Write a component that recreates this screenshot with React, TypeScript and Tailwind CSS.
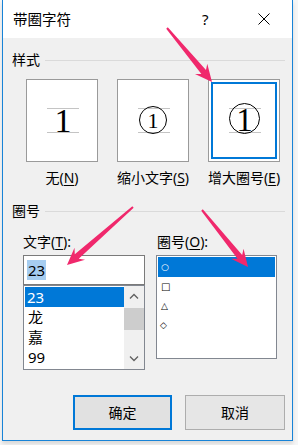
import React from "react";

const PINK = "#f0286c";

function arrowPoints(x1: number, y1: number, x2: number, y2: number) {
  const dx = x2 - x1;
  const dy = y2 - y1;
  const len = Math.hypot(dx, dy);
  const ux = dx / len;
  const uy = dy / len;
  const nx = -uy;
  const ny = ux;
  const head = 17;
  const bx = x2 - ux * head;
  const by = y2 - uy * head;
  const nb = x2 - ux * (head - 4);
  const nby = y2 - uy * (head - 4);
  const pts = [
    [x1 + nx * 1, y1 + ny * 1],
    [nb + nx * 3, nby + ny * 3],
    [bx + nx * 8, by + ny * 8],
    [x2, y2],
    [bx - nx * 8, by - ny * 8],
    [nb - nx * 3, nby - ny * 3],
    [x1 - nx * 1, y1 - ny * 1],
  ];
  return pts.map((p) => p.join(",")).join(" ");
}

const Arrows: React.FC = () => (
  <svg className="absolute left-0 top-0 pointer-events-none" width={298} height={445}>
    <polygon points={arrowPoints(167, 28, 212, 82)} fill={PINK} />
    <polygon points={arrowPoints(133, 207, 67, 265)} fill={PINK} />
    <polygon points={arrowPoints(202, 210, 248, 267)} fill={PINK} />
  </svg>
);

const Guides = () => (
  <>
    <line x1={20} y1={28.5} x2={52} y2={28.5} stroke="#c4c4c4" />
    <line x1={20} y1={52.5} x2={52} y2={52.5} stroke="#c4c4c4" />
  </>
);

const serif = { fontFamily: "'Liberation Serif', serif" };

const Preview: React.FC<{ kind: number }> = ({ kind }) => (
  <svg width={70} height={81}>
    <Guides />
    {kind === 0 && (
      <text x={36} y={52} textAnchor="middle" fontSize={34} style={serif}>
        1
      </text>
    )}
    {kind === 1 && (
      <>
        <circle cx={35} cy={40} r={13.5} fill="none" stroke="#000" strokeWidth={1} />
        <text x={35} y={48} textAnchor="middle" fontSize={22} style={serif}>
          1
        </text>
      </>
    )}
    {kind === 2 && (
      <>
        <circle cx={35.5} cy={38.5} r={15} fill="none" stroke="#000" strokeWidth={1} />
        <text x={35.5} y={51} textAnchor="middle" fontSize={33} style={serif}>
          1
        </text>
      </>
    )}
  </svg>
);

const Chevron: React.FC<{ up?: boolean }> = ({ up }) => (
  <svg width={10} height={6}>
    <path d={up ? "M1 5.5 L5 1.5 L9 5.5" : "M1 0.5 L5 4.5 L9 0.5"} fill="none" stroke="#606060" strokeWidth={1.3} />
  </svg>
);

const Mn: React.FC<{ c: string }> = ({ c }) => <span className="underline underline-offset-2">{c}</span>;

export default function App() {
  const styles = [
    { label: <>无(<Mn c="N" />)</> },
    { label: <>缩小文字(<Mn c="S" />)</> },
    { label: <>增大圈号(<Mn c="E" />)</> },
  ];

  return (
    <div className="relative w-[298px] h-[445px] bg-[#f6f6f6] overflow-hidden font-['Noto_Sans','Noto_Sans_CJK_SC',sans-serif] text-black">
      <div className="ml-[2px] w-[291px] h-[441px] flex flex-col border-x border-b border-[#1883d7] shadow-[0_3px_4px_rgba(0,0,0,0.12)]">
        {/* title bar */}
        <div className="h-[38px] bg-white flex items-center pl-[10px] text-[14.5px] leading-[16px]">
          <span>带圈字符</span>
          <span className="ml-[131px] text-[15px]">?</span>
          <svg className="ml-[49px]" width={12} height={12}>
            <path d="M0.5 0.5 L11.5 11.5 M11.5 0.5 L0.5 11.5" stroke="#000" strokeWidth={1} />
          </svg>
        </div>

        {/* body */}
        <div className="flex-1 bg-[#f0f0f0] flex flex-col text-[14px] leading-[16px]">
          <div className="pt-[14px] pl-[9px] pr-[7px] flex items-center">
            <span>样式</span>
            <div className="ml-[5px] flex-1 h-px bg-[#dadada]" />
          </div>

          <div className="mt-[11px] pl-[23px] flex gap-[19px]">
            {styles.map((s, i) => (
              <div key={i} className="w-[72px] flex flex-col items-center">
                <div
                  className={
                    "w-[72px] h-[83px] bg-white border border-[#9a9a9a] " +
                    (i === 2 ? "p-[2px]" : "")
                  }
                >
                  {i === 2 ? (
                    <div className="w-full h-full border-2 border-[#0078d7] flex items-center justify-center">
                      <div className="-m-[4px]">
                        <Preview kind={i} />
                      </div>
                    </div>
                  ) : (
                    <Preview kind={i} />
                  )}
                </div>
                <div className="mt-[8px] whitespace-nowrap">{s.label}</div>
              </div>
            ))}
          </div>

          <div className="mt-[17px] pl-[9px] pr-[7px] flex items-center">
            <span>圈号</span>
            <div className="ml-[5px] flex-1 h-px bg-[#dadada]" />
          </div>

          <div className="mt-[15px] pl-[20px] flex gap-[11px]">
            {/* 文字 */}
            <div className="w-[122px] flex flex-col">
              <div className="whitespace-nowrap">
                文字(<Mn c="T" />):
              </div>
              <div className="mt-[5px] h-[30px] bg-white border border-[#7a7a7a] flex items-center pl-[3px]">
                <span className="bg-[#a6cdf0] px-px text-[15px] leading-[20px]">23</span>
              </div>
              <div className="h-[85px] bg-white border-x border-b border-[#828790] border-t flex">
                <div className="flex-1 pt-px pl-px text-[15px]">
                  <div className="h-[20px] bg-[#0078d7] text-white pl-[2px] leading-[20px]">23</div>
                  <div className="h-[20px] pl-[3px] leading-[20px]">龙</div>
                  <div className="h-[20px] pl-[3px] leading-[20px]">嘉</div>
                  <div className="h-[20px] pl-[3px] leading-[20px]">99</div>
                </div>
                <div className="w-[20px] bg-[#f0f0f0] flex flex-col">
                  <div className="h-[20px] flex items-center justify-center">
                    <Chevron up />
                  </div>
                  <div className="mt-[2px] h-[22px] bg-[#cdcdcd]" />
                  <div className="flex-1" />
                  <div className="h-[21px] flex items-center justify-center">
                    <Chevron />
                  </div>
                </div>
              </div>
            </div>

            {/* 圈号 */}
            <div className="w-[121px] flex flex-col">
              <div className="pl-px whitespace-nowrap">
                圈号(<Mn c="O" />):
              </div>
              <div className="mt-[5px] h-[104px] bg-white border border-[#828790] p-px font-['DejaVu_Sans',sans-serif] text-[9px]">
                <div className="h-[20px] bg-[#0078d7] text-white pl-[3px] flex items-center">○</div>
                <div className="h-[20px] pl-[3px] flex items-center text-[10px]">□</div>
                <div className="h-[18px] pl-[3px] flex items-center">△</div>
                <div className="h-[20px] pl-[2px] flex items-center">◇</div>
              </div>
            </div>
          </div>

          <div className="mt-[25px] pr-[7px] flex justify-end gap-[13px]">
            <button className="w-[99px] h-[35px] bg-[#e1e1e1] border-2 border-[#0078d7] text-[14px]">确定</button>
            <button className="w-[100px] h-[35px] bg-[#e6e6e6] border border-[#adadad] text-[14px]">取消</button>
          </div>
        </div>
      </div>
      <Arrows />
    </div>
  );
}
